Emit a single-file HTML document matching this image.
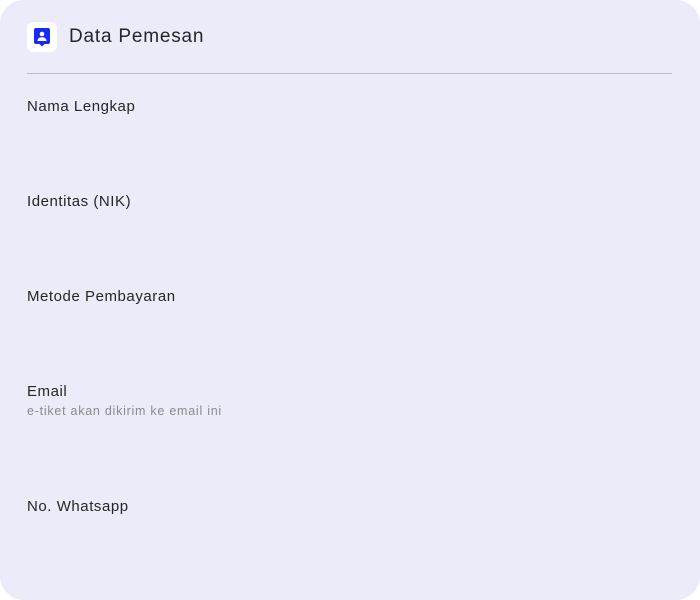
<!DOCTYPE html>
<html><head><style>
html,body{margin:0;padding:0;background:#fff;}
.card{position:absolute;left:0;top:0;width:700px;height:600px;background:#ECEBFA;border-radius:24px;font-family:"Liberation Sans",sans-serif;color:#222;}
.ic{position:absolute;left:27px;top:22px;width:30px;height:30px;background:#fff;border-radius:6px;}
.title{position:absolute;left:69px;top:26px;font-size:19px;color:#262626;letter-spacing:0.8px;}
.line{position:absolute;left:27px;right:28px;top:73px;height:1px;background:#B9BCD6;}
.lb{position:absolute;left:27px;font-size:15px;color:#262626;letter-spacing:0.55px;}
.sub{position:absolute;left:27px;font-size:12.5px;color:#8a8a8f;letter-spacing:0.75px;}
</style></head><body>
<div class="card">
<div class="ic"><svg width="30" height="30" viewBox="0 0 30 30"><path d="M7 8a2 2 0 0 1 2-2h12a2 2 0 0 1 2 2v12a2 2 0 0 1-2 2h-3.5L15 24.5 12.5 22H9a2 2 0 0 1-2-2z" fill="#1A2BF0"/><circle cx="15" cy="12" r="2.3" fill="#fff"/><path d="M10.5 19c0-2.5 2-3.8 4.5-3.8s4.5 1.3 4.5 3.8z" fill="#fff"/></svg></div>
<div class="title">Data Pemesan</div>
<div class="line"></div>
<div class="lb" style="top:98px">Nama Lengkap</div>
<div class="lb" style="top:193px">Identitas (NIK)</div>
<div class="lb" style="top:288px">Metode Pembayaran</div>
<div class="lb" style="top:383px">Email</div>
<div class="sub" style="top:404px">e-tiket akan dikirim ke email ini</div>
<div class="lb" style="top:498px">No. Whatsapp</div>
</div>
</body></html>
